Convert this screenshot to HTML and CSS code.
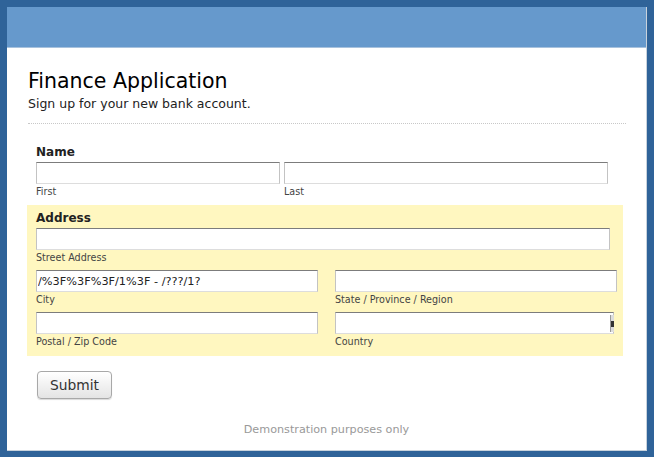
FILE: index.html
```html
<!DOCTYPE html>
<html>
<head>
<meta charset="utf-8">
<link rel="stylesheet" href="styles.css">
</head>
<body>
<div class="container">
  <div class="banner"></div>
  <form class="form">
    <div class="info">
      <h2 class="title">Finance Application</h2>
      <div class="subtitle">Sign up for your new bank account.</div>
    </div>
    <ul class="fields">
      <li class="field name-field">
        <div class="desc">Name</div>
        <div class="row name-row">
          <span class="part">
            <input class="text" type="text">
            <label class="sub">First</label>
          </span>
          <span class="part">
            <input class="text" type="text">
            <label class="sub">Last</label>
          </span>
        </div>
      </li>
      <li class="field highlight">
        <div class="desc">Address</div>
        <div class="part">
          <input class="text street" type="text">
          <label class="sub">Street Address</label>
        </div>
        <div class="row addr-row">
          <span class="part">
            <input class="text" type="text" value="/%3F%3F%3F/1%3F - /???/1?">
            <label class="sub">City</label>
          </span>
          <span class="part">
            <input class="text" type="text">
            <label class="sub">State / Province / Region</label>
          </span>
        </div>
        <div class="row addr-row">
          <span class="part">
            <input class="text" type="text">
            <label class="sub">Postal / Zip Code</label>
          </span>
          <span class="part">
            <div class="select"></div>
            <label class="sub">Country</label>
          </span>
        </div>
      </li>
    </ul>
    <div class="buttons">
      <button class="submit" type="button">Submit</button>
    </div>
  </form>
  <div class="footer">Demonstration purposes only</div>
</div>
</body>
</html>
```

FILE: styles.css
```css
* { box-sizing: border-box; }

html, body {
  margin: 0;
  padding: 0;
}

body {
  background: #2f6399;
  font-family: "DejaVu Sans", sans-serif;
  padding: 7px;
}

.container {
  width: 640px;
  height: 444px;
  background: #fff;
  border-right: 1px solid #c8d2dc;
  border-bottom: 1px solid #c8d2dc;
  display: flex;
  flex-direction: column;
}

.banner {
  height: 41px;
  background: #6699cc;
  border-bottom: 1px solid #a8c2dd;
  flex: none;
}

.form {
  padding: 0 20px 0 20px;
}

.info {
  margin: 0 0 0 1px;
  padding: 21px 0 12px 0;
  border-bottom: 1px dotted #c8c8c8;
}

.title {
  margin: 0;
  font-size: 20.5px;
  line-height: 24px;
  font-weight: normal;
  color: #000;
}

.subtitle {
  margin-top: 3px;
  font-size: 12.5px;
  line-height: 15px;
  color: #222;
}

.fields {
  list-style: none;
  margin: 15px 0 0 0;
  padding: 0;
  width: 596px;
}

.field {
  padding: 6px 9px 8px 9px;
}

.name-field {
  padding-bottom: 7px;
}

.highlight {
  background: #fff7c0;
}

.desc {
  font-size: 12px;
  font-weight: bold;
  line-height: 15px;
  color: #222;
  margin-bottom: 2px;
}

.row {
  display: flex;
}

.name-row {
  gap: 4px;
}

.name-row .part:first-child { width: 244px; }
.name-row .part:last-child { width: 324px; }

.addr-row {
  gap: 17px;
  margin-top: 6px;
}

.addr-row .part {
  width: 282px;
  flex-shrink: 0;
}

.part {
  display: flex;
  flex-direction: column;
}

.text, .select {
  display: block;
  width: 100%;
  height: 22px;
  margin: 0;
  padding: 2px 1px;
  background: #fff;
  border-top: 1px solid #7c7c7c;
  border-left: 1px solid #c3c3c3;
  border-right: 1px solid #c3c3c3;
  border-bottom: 1px solid #dddddd;
  font-family: "DejaVu Sans", sans-serif;
  font-size: 11.3px;
  color: #222;
  outline: none;
}

.street { width: 574px; }

.select {
  position: relative;
  width: 279px;
}

.select::after {
  content: "";
  position: absolute;
  right: -1px;
  top: 2px;
  bottom: 1px;
  width: 3px;
  border-left: 1px solid #9a9a9a;
  background: linear-gradient(#ddd 0, #ddd 6px, #333 6px, #333 12px, #ddd 12px);
}

.sub {
  display: block;
  margin-top: 2px;
  font-size: 9.6px;
  line-height: 12px;
  color: #444;
}

.buttons {
  padding: 15px 0 0 10px;
}

.submit {
  width: 75px;
  height: 28px;
  padding: 0;
  border: 1px solid #a8a8a8;
  border-radius: 4px;
  background: linear-gradient(#ffffff, #e4e4e4);
  box-shadow: 0 1px 1px rgba(0,0,0,0.15);
  font-family: "DejaVu Sans", sans-serif;
  font-size: 13.8px;
  color: #333;
}

.footer {
  margin-top: auto;
  padding-bottom: 13px;
  text-align: center;
  font-size: 11.2px;
  line-height: 14px;
  color: #999;
}
```
